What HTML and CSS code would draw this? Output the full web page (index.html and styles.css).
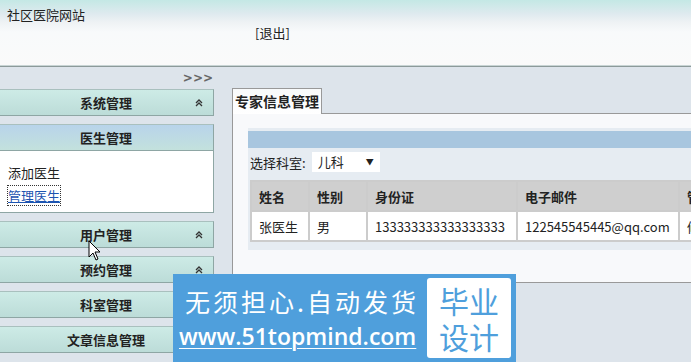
FILE: index.html
```html
<!DOCTYPE html>
<html lang="zh-CN">
<head>
  <meta charset="UTF-8">
  <title>社区医院网站</title>
  <link rel="stylesheet" href="styles.css">
</head>
<body>
  <div class="header">
    <div class="site-name">社区医院网站</div>
    <div class="logout">[退出]</div>
  </div>

  <div class="main">
    <div class="sidebar">
      <div class="toggle">&gt;&gt;&gt;</div>

      <div class="menu-head first">系统管理<svg class="arrow" width="8" height="8" viewBox="0 0 8 8"><path d="M1 4 L4 1 L7 4 M1 7 L4 4 L7 7" fill="none" stroke="#333" stroke-width="1.3"/></svg></div>

      <div class="menu-head open">医生管理</div>
      <div class="menu-body">
        <div class="menu-link">添加医生</div>
        <div class="menu-link"><a href="#">管理医生</a></div>
      </div>

      <div class="menu-head">用户管理<svg class="arrow" width="8" height="8" viewBox="0 0 8 8"><path d="M1 4 L4 1 L7 4 M1 7 L4 4 L7 7" fill="none" stroke="#333" stroke-width="1.3"/></svg></div>
      <div class="menu-head">预约管理<svg class="arrow" width="8" height="8" viewBox="0 0 8 8"><path d="M1 4 L4 1 L7 4 M1 7 L4 4 L7 7" fill="none" stroke="#333" stroke-width="1.3"/></svg></div>
      <div class="menu-head">科室管理</div>
      <div class="menu-head">文章信息管理</div>
    </div>

    <div class="content">
      <div class="tabs">
        <div class="tab">专家信息管理</div>
      </div>
      <div class="panel">
        <div class="inner">
          <div class="bar"></div>
          <div class="filter">
            选择科室:
            <div class="select">儿科<span class="caret">&#9660;</span></div>
          </div>
          <table class="grid">
            <colgroup>
              <col class="c1"><col class="c2"><col class="c3"><col class="c4"><col class="c5">
            </colgroup>
            <tr>
              <th>姓名</th>
              <th>性别</th>
              <th>身份证</th>
              <th>电子邮件</th>
              <th>管理</th>
            </tr>
            <tr>
              <td>张医生</td>
              <td>男</td>
              <td>133333333333333333</td>
              <td>122545545445@qq.com</td>
              <td>修改</td>
            </tr>
          </table>
        </div>
      </div>
    </div>
  </div>

  <svg class="cursor" width="14" height="22" viewBox="0 0 14 22">
    <path d="M1 1 L1 17 L5 13 L8 20 L10 19 L7 12 L12 12 Z" fill="#fff" stroke="#000" stroke-width="1"/>
  </svg>

  <div class="promo">
    <div class="promo-text">
      <div class="promo-line1">无须担心.自动发货</div>
      <div class="promo-line2">www.51topmind.com</div>
    </div>
    <div class="promo-badge">毕业<br>设计</div>
  </div>
</body>
</html>
```

FILE: styles.css
```css
body {
  margin: 0;
  font-family: "Noto Sans CJK SC", "DejaVu Sans", sans-serif;
  font-size: 13px;
  color: #222;
  background-color: #dde4eb;
  overflow: hidden;
}

.header {
  height: 65px;
  background: linear-gradient(to bottom, #c4e8e5 0px, #dfeaef 14px, #eef2f4 22px, #f8fafb 32px, #fafafa 100%);
  border-bottom: 1px solid #c8d4d4;
  box-shadow: 0 1px 0 #8c9a9a;
}

.site-name {
  padding: 5px 0 0 7px;
  line-height: 20px;
}

.logout {
  padding-left: 255px;
  line-height: 16px;
}

.main {
  display: flex;
  margin-top: 2px;
}

.sidebar {
  width: 216px;
  margin-left: -2px;
}

.toggle {
  text-align: right;
  height: 20px;
  line-height: 20px;
  padding-right: 1px;
  color: #666;
  font-family: "DejaVu Sans", sans-serif;
  font-weight: bold;
  font-size: 12px;
}

.menu-head {
  position: relative;
  height: 25px;
  line-height: 25px;
  margin-top: 8px;
  text-align: center;
  font-weight: bold;
  font-size: 13px;
  background: linear-gradient(to bottom, #cdebe6, #bcdcd8);
  border: 1px solid #8ea6a4;
  border-top-color: #a9c0be;
}

.menu-head.first {
  margin-top: 1px;
}

.menu-head .arrow {
  position: absolute;
  right: 10px;
  top: 9px;
}

.menu-head.open {
  margin-top: 8px;
  background: linear-gradient(to bottom, #b8d4ea, #c3e1dd);
}

.menu-body {
  background-color: #fff;
  border: 1px solid #8ea6a4;
  border-top: none;
  height: 51px;
  padding: 10px 0 0 9px;
}

.menu-link {
  line-height: 23px;
}

.menu-link a {
  color: #1c54b0;
  outline: 1px dotted #333;
}

.content {
  flex: 1;
  margin-left: 18px;
  padding-top: 20px;
  min-width: 0;
}

.tabs {
  display: flex;
  height: 25px;
  border-bottom: 1px solid #999;
}

.tab {
  font-weight: bold;
  font-size: 14px;
  padding: 0 2px;
  line-height: 25px;
  background: linear-gradient(to bottom, #f8fafb, #ffffff);
  border: 1px solid #999;
  border-bottom: none;
  margin-bottom: -1px;
}

.panel {
  height: 154px;
  background-color: #f8f9fb;
  border-left: 1px solid #999;
  border-bottom: 1px solid #999;
  padding: 14px 0 0 15px;
  overflow: hidden;
}

.inner {
  background-color: #e6ecf2;
  padding-top: 3px;
  height: 119px;
  padding-left: 2px;
}

.bar {
  height: 17px;
  background-color: #a8c6df;
  margin-left: -2px;
}

.filter {
  display: flex;
  align-items: center;
  height: 26px;
  margin-top: 1px;
}

.select {
  margin-left: 6px;
  width: 62px;
  height: 20px;
  line-height: 20px;
  background-color: #fff;
  padding-left: 6px;
  position: relative;
}

.caret {
  position: absolute;
  right: 6px;
  top: 0;
  font-size: 8px;
}

.grid {
  border-collapse: collapse;
  table-layout: fixed;
  width: 490px;
  margin-top: 5px;
}

.grid th,
.grid td {
  height: 28px;
  padding: 0 0 0 7px;
  text-align: left;
  white-space: nowrap;
  overflow: hidden;
  border: 2px solid #ccc;
}

.grid th {
  background-color: #cfcfcf;
  font-weight: bold;
}

.grid td {
  background-color: #fff;
}

.c1 { width: 58px; }
.c2 { width: 58px; }
.c3 { width: 150px; }
.c4 { width: 162px; }
.c5 { width: 62px; }

.cursor {
  position: absolute;
  left: 88px;
  top: 240px;
}

.promo {
  position: absolute;
  left: 173px;
  top: 274px;
  width: 343px;
  height: 88px;
  background-color: #4f9fdc;
  display: flex;
  align-items: center;
  padding-left: 6px;
  box-sizing: border-box;
}

.promo-text {
  color: #fff;
  width: 245px;
}

.promo-line1 {
  font-size: 25px;
  line-height: 36px;
  padding-left: 6px;
  letter-spacing: 3px;
  white-space: nowrap;
}

.promo-line2 {
  font-family: "Open Sans", sans-serif;
  font-weight: 600;
  font-size: 23px;
  line-height: 34px;
  text-decoration: underline;
  text-decoration-thickness: 1px;
  text-underline-offset: 3px;
}

.promo-badge {
  margin-left: 3px;
  width: 84px;
  height: 80px;
  background-color: #fff;
  border-radius: 3px;
  color: #4f9fdc;
  font-size: 30px;
  line-height: 36px;
  text-align: center;
  padding-top: 4px;
  box-sizing: border-box;
}
```
